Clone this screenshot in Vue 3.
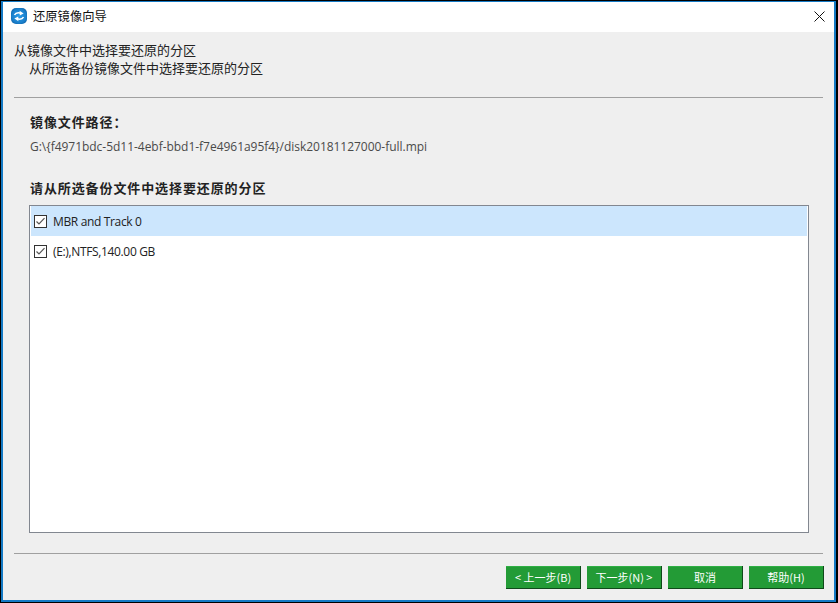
<script setup>
const rows = [
  { label: 'MBR and Track 0', selected: true },
  { label: '(E:),NTFS,140.00 GB', selected: false },
]
const buttons = ['< 上一步(B)', '下一步(N) >', '取消', '帮助(H)']
</script>

<template>
  <div class="screen">
    <div class="window">
      <header class="titlebar">
        <svg class="logo" width="16" height="16" viewBox="0 0 16 16">
          <defs>
            <radialGradient id="lg" cx="50%" cy="50%" r="62%">
              <stop offset="0" stop-color="#2a9ae6" />
              <stop offset="0.7" stop-color="#1a80cc" />
              <stop offset="1" stop-color="#0b5fa5" />
            </radialGradient>
          </defs>
          <rect width="16" height="16" rx="5" fill="url(#lg)" />
          <path d="M3.5 7 C4.5 5 7 4.4 10 5.2" fill="none" stroke="#fff" stroke-width="1.6" />
          <path d="M8.6 2.8 L12.6 5.6 L8.8 7.4 Z" fill="#fff" />
          <path d="M12.5 9 C11.5 11 9 11.6 6 10.8" fill="none" stroke="#fff" stroke-width="1.6" />
          <path d="M7.4 13.2 L3.4 10.4 L7.2 8.6 Z" fill="#fff" />
        </svg>
        <span class="title">还原镜像向导</span>
        <svg class="close" width="11" height="11" viewBox="0 0 11 11">
          <path d="M0.5 0.5 L10.5 10.5 M10.5 0.5 L0.5 10.5" stroke="#111" stroke-width="1" fill="none" />
        </svg>
      </header>

      <main class="body">
        <section class="intro">
          <p>从镜像文件中选择要还原的分区</p>
          <p class="indent">从所选备份镜像文件中选择要还原的分区</p>
        </section>
        <hr class="rule" />
        <section class="content">
          <h2 class="label">镜像文件路径：</h2>
          <p class="path">G:\{f4971bdc-5d11-4ebf-bbd1-f7e4961a95f4}/disk20181127000-full.mpi</p>
          <h2 class="label second">请从所选备份文件中选择要还原的分区</h2>
          <div class="list">
            <div v-for="row in rows" :key="row.label" class="row" :class="{ selected: row.selected }">
              <svg class="check" width="13" height="13" viewBox="0 0 13 13">
                <rect x="0.5" y="0.5" width="12" height="12" fill="#fff" stroke="#333" />
                <path d="M2.5 6.5 L5 9 L10.5 3.2" fill="none" stroke="#555" stroke-width="1.2" />
              </svg>
              <span>{{ row.label }}</span>
            </div>
          </div>
        </section>
        <hr class="rule" />
        <footer class="actions">
          <button v-for="b in buttons" :key="b" class="btn" type="button">{{ b }}</button>
        </footer>
      </main>
    </div>
  </div>
</template>

<style>
html, body { margin: 0; background: #000; }
</style>

<style scoped>
.screen {
  box-sizing: border-box;
  width: 838px;
  height: 603px;
  background: #000;
  padding: 1px 2px 1px 1px;
}
.window {
  box-sizing: border-box;
  height: 100%;
  border: 2px solid #1479c4;
  border-top-width: 1px;
  display: flex;
  flex-direction: column;
  font-family: "Noto Sans CJK SC", "Liberation Sans", sans-serif;
  font-size: 13px;
  color: #222;
  background: #efefef;
  overflow: hidden;
}
.titlebar {
  box-sizing: border-box;
  height: 30px;
  flex: none;
  background: #fff;
  display: flex;
  align-items: center;
  padding: 0 9px 2px 8px;
}
.logo { flex: none; }
.title {
  margin-left: 6px;
  font-size: 12.3px;
  line-height: 16px;
  color: #111;
  flex: 1;
}
.close { flex: none; }
.body {
  flex: 1;
  display: flex;
  flex-direction: column;
  padding: 0 10px 0 11px;
}
.intro {
  padding-top: 9px;
  height: 65px;
  box-sizing: border-box;
  line-height: 18px;
  font-size: 13px;
}
.intro p { margin: 0; }
.intro .indent { padding-left: 15px; }
.rule {
  margin: 0;
  border: 0;
  height: 1px;
  width: 809px;
  background: #a0a0a0;
  flex: none;
}
.content {
  flex: none;
  padding: 15px 15px 20px 15px;
  display: flex;
  flex-direction: column;
}
.label {
  margin: 0;
  padding-left: 1px;
  font-size: 13px;
  font-weight: 700;
  line-height: 18px;
  color: #222;
  letter-spacing: 0.9px;
}
.label.second { margin-top: 23px; }
.path {
  margin: 7px 0 0;
  padding-left: 1px;
  font-family: "Open Sans", sans-serif;
  font-size: 12px;
  letter-spacing: -0.03px;
  line-height: 18px;
  color: #4a4a4a;
}
.list {
  margin-top: 8px;
  height: 328px;
  box-sizing: border-box;
  border: 1px solid #828790;
  background: #fff;
  padding: 0 1px;
  font-family: "Open Sans", sans-serif;
  font-size: 12px;
  letter-spacing: -0.35px;
  color: #222;
}
.row {
  box-sizing: border-box;
  height: 30px;
  padding: 1px 0 0 3px;
  display: flex;
  align-items: center;
}
.row.selected { background: #cce6fd; }
.check { margin-right: 6px; flex: none; }
.actions {
  display: flex;
  justify-content: flex-end;
  gap: 6px;
  margin-top: 12px;
}
.btn {
  width: 75px;
  height: 23px;
  padding: 0;
  box-sizing: border-box;
  background: #239b36;
  border: 0;
  border-right: 1px solid #0f4a1a;
  border-bottom: 1px solid #0f4a1a;
  box-shadow: inset 0 1px 0 #2fb044;
  color: #fff;
  font-family: "Noto Sans CJK SC", "Liberation Sans", sans-serif;
  font-size: 11px;
  line-height: 1;
}
</style>
